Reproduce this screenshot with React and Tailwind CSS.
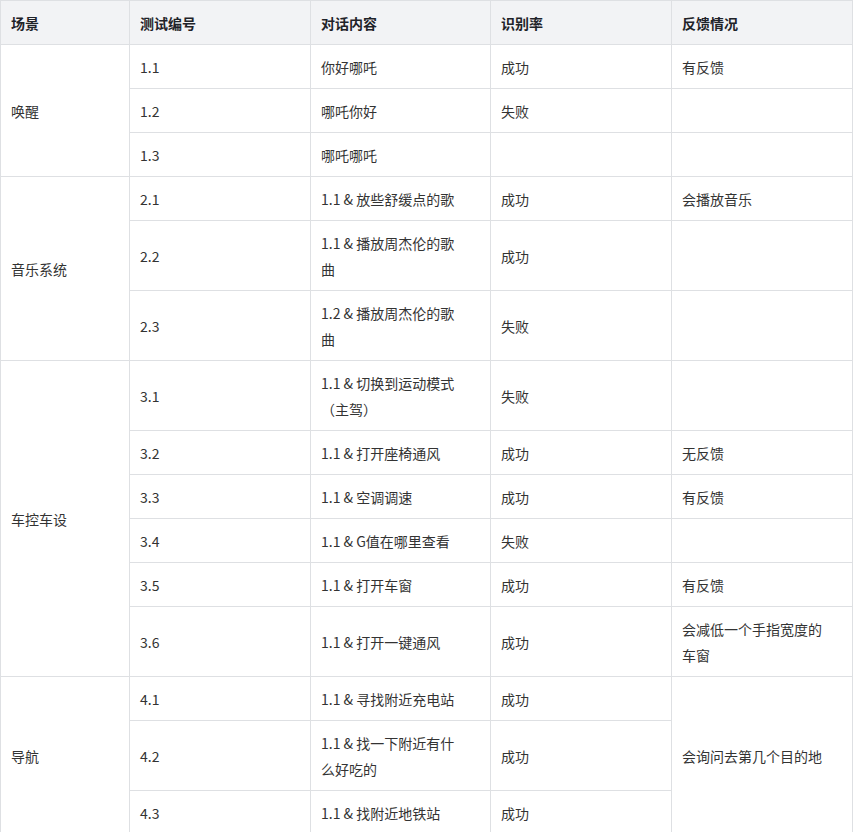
const rows = [
  ["唤醒", 3, "1.1", "你好哪吒", "成功", "有反馈", 1],
  [null, 0, "1.2", "哪吒你好", "失败", "", 1],
  [null, 0, "1.3", "哪吒哪吒", "", "", 1],
  ["音乐系统", 3, "2.1", "1.1 & 放些舒缓点的歌", "成功", "会播放音乐", 1],
  [null, 0, "2.2", ["1.1 & 播放周杰伦的歌", "曲"], "成功", "", 1],
  [null, 0, "2.3", ["1.2 & 播放周杰伦的歌", "曲"], "失败", "", 1],
  ["车控车设", 6, "3.1", ["1.1 & 切换到运动模式", "（主驾）"], "失败", "", 1],
  [null, 0, "3.2", "1.1 & 打开座椅通风", "成功", "无反馈", 1],
  [null, 0, "3.3", "1.1 & 空调调速", "成功", "有反馈", 1],
  [null, 0, "3.4", "1.1 & G值在哪里查看", "失败", "", 1],
  [null, 0, "3.5", "1.1 & 打开车窗", "成功", "有反馈", 1],
  [null, 0, "3.6", "1.1 & 打开一键通风", "成功", ["会减低一个手指宽度的", "车窗"], 1],
  ["导航", 3, "4.1", "1.1 & 寻找附近充电站", "成功", "会询问去第几个目的地", 3],
  [null, 0, "4.2", ["1.1 & 找一下附近有什", "么好吃的"], "成功", null, 0],
  [null, 0, "4.3", "1.1 & 找附近地铁站", "成功", null, 0],
];
const td = "border border-[#dee0e3] px-[10px] py-[8.5px] align-middle whitespace-pre";
const show = (v) => (Array.isArray(v) ? <>{v[0]}<br />{v[1]}</> : v);
export default function App() {
  return (
    <div className="bg-white" style={{ fontFamily: '"Noto Sans CJK SC", "Noto Sans", sans-serif' }}>
      <table className="border-collapse table-fixed text-[14px] leading-[26px] text-[#333]" style={{ width: 853 }}>
        <colgroup>
          <col className="w-[129px]" /><col className="w-[181px]" /><col className="w-[180px]" /><col className="w-[181px]" /><col />
        </colgroup>
        <thead>
          <tr className="bg-[#f2f3f5] text-[#1f2329] font-bold">
            {["场景", "测试编号", "对话内容", "识别率", "反馈情况"].map((h) => (
              <th key={h} className={td + " text-left"}>{h}</th>
            ))}
          </tr>
        </thead>
        <tbody>
          {rows.map((r, i) => (
            <tr key={i}>
              {r[0] !== null && <td rowSpan={r[1]} className={td}>{r[0]}</td>}
              <td className={td}>{r[2]}</td>
              <td className={td}>{show(r[3])}</td>
              <td className={td}>{r[4]}</td>
              {r[5] !== null && <td rowSpan={r[6]} className={td}>{show(r[5])}</td>}
            </tr>
          ))}
        </tbody>
      </table>
    </div>
  );
}
